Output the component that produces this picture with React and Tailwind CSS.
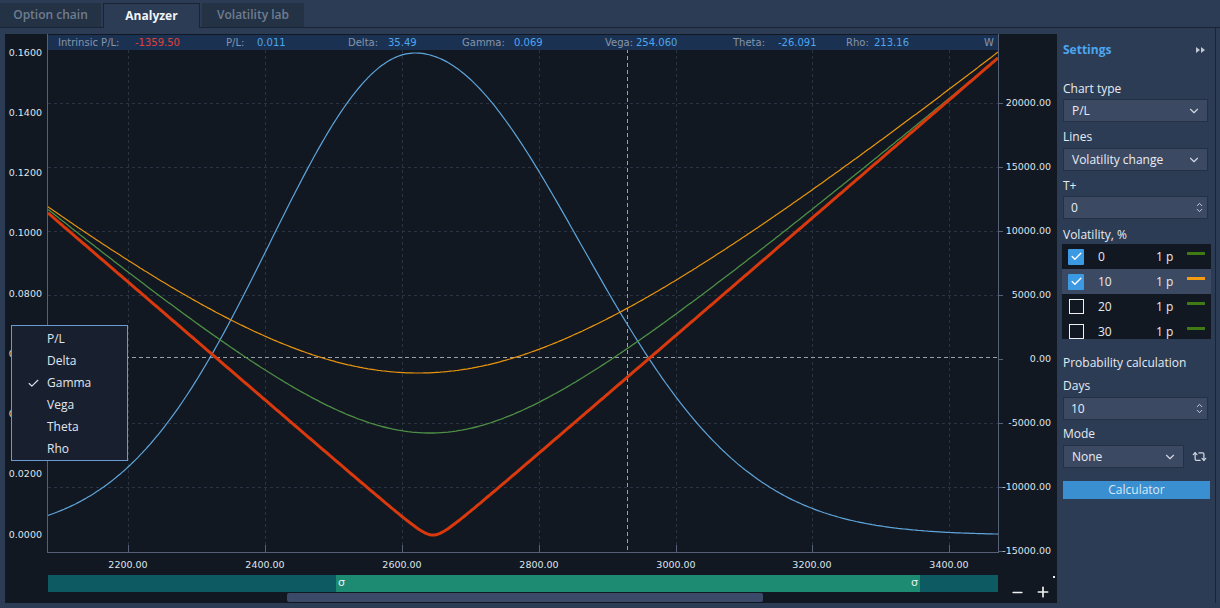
import React from 'react';
import { ChevronDown, ChevronUp, Check, Minus, Plus, Repeat2 } from 'lucide-react';

const X0 = 48;
const X1 = 998;

function curve(f) {
  let d = '';
  for (let x = X0; x <= X1; x += 2) {
    d += (x === X0 ? 'M' : 'L') + x + ',' + f(x).toFixed(1) + ' ';
  }
  return d;
}

// curves in page coordinates
const blue = (x) => {
  const d = x - 415;
  const s = d < 0 ? 145 : 165;
  return 535 - 482 * Math.exp(-(d * d) / (2 * s * s));
};
const red = (x) => {
  const d = x - 433;
  return 545 - Math.sqrt((0.862 * d) ** 2 + 100);
};
const green = (x) => {
  const d = x - 430;
  return 558 - Math.sqrt((0.852 * d) ** 2 + 125 * 125);
};
const orange = (x) => {
  const d = x - 418;
  return 573.6 - Math.sqrt((0.83 * d) ** 2 + 200.6 ** 2);
};

const leftLabels = ['0.1600', '0.1400', '0.1200', '0.1000', '0.0800', '0.0600', '0.0400', '0.0200', '0.0000'];
const rightLabels = ['20000.00', '15000.00', '10000.00', '5000.00', '0.00', '-5000.00', '-10000.00', '-15000.00'];
const xTicks = [
  [128, '2200.00'],
  [265, '2400.00'],
  [402, '2600.00'],
  [539, '2800.00'],
  [676, '3000.00'],
  [812, '3200.00'],
  [949, '3400.00'],
];

const header = [
  { label: 'Intrinsic P/L:', lx: 58, value: '-1359.50', vx: 135, red: true },
  { label: 'P/L:', lx: 226, value: '0.011', vx: 257 },
  { label: 'Delta:', lx: 348, value: '35.49', vx: 388 },
  { label: 'Gamma:', lx: 462, value: '0.069', vx: 514 },
  { label: 'Vega:', lx: 605, value: '254.060', vx: 636 },
  { label: 'Theta:', lx: 733, value: '-26.091', vx: 778 },
  { label: 'Rho:', lx: 846, value: '213.16', vx: 874 },
];

const vols = [
  { v: '0', on: true, color: '#3f7a14' },
  { v: '10', on: true, color: '#f39c12', hl: true },
  { v: '20', on: false, color: '#3f7a14' },
  { v: '30', on: false, color: '#3f7a14' },
];

function Chart() {
  return (
    <svg width="1052" height="539" viewBox="5 34 1052 539" className="block" style={{ fontFamily: '"DejaVu Sans", sans-serif' }}>
      <defs>
        <clipPath id="plot">
          <rect x="48" y="50" width="950" height="502" />
        </clipPath>
      </defs>
      {/* grid */}
      {xTicks.map(([x]) => (
        <line key={x} x1={x + 0.5} y1="50" x2={x + 0.5} y2="552" stroke="#2a3342" strokeDasharray="3 3" />
      ))}
      {[103, 167, 231, 295, 423, 487].map((y) => (
        <line key={y} x1="48" y1={y + 0.5} x2="998" y2={y + 0.5} stroke="#2a3342" strokeDasharray="3 3" />
      ))}
      {/* crosshair */}
      <line x1="627.5" y1="35" x2="627.5" y2="552" stroke="#9aa0a8" strokeDasharray="4 3" />
      <line x1="48" y1="357.5" x2="998" y2="357.5" stroke="#9aa0a8" strokeDasharray="4 3" />
      {/* curves */}
      <g clipPath="url(#plot)" fill="none">
        <path d={curve(blue)} stroke="#5ea5dc" strokeWidth="1.2" />
        <path d={curve(green)} stroke="#4d8f45" strokeWidth="1.3" />
        <path d={curve(red)} stroke="#d9390c" strokeWidth="3" strokeLinejoin="round" />
        <path d={curve(orange)} stroke="#e8940e" strokeWidth="1.2" />
      </g>
      {/* frame */}
      <line x1="47.5" y1="34" x2="47.5" y2="553" stroke="#566076" />
      <line x1="998.5" y1="34" x2="998.5" y2="553" stroke="#566076" />
      <line x1="47" y1="552.5" x2="999" y2="552.5" stroke="#566076" />
      {/* left axis */}
      {leftLabels.map((t, i) => (
        <text key={t} x="42" y={53 + i * 60.25} textAnchor="end" dominantBaseline="middle" fontSize="9.5" fill="#dde4ee">
          {t}
        </text>
      ))}
      {/* right axis */}
      {rightLabels.map((t, i) => (
        <g key={t}>
          <line x1="999" y1={103 + i * 64 + 0.5} x2="1003" y2={103 + i * 64 + 0.5} stroke="#566076" />
          <text x="1051" y={103 + i * 64} textAnchor="end" dominantBaseline="middle" fontSize="9.5" fill="#dde4ee">
            {t}
          </text>
        </g>
      ))}
      {/* bottom axis */}
      {xTicks.map(([x, t]) => (
        <g key={t}>
          <line x1={x + 0.5} y1="545" x2={x + 0.5} y2="552" stroke="#566076" />
          <text x={x} y="565" textAnchor="middle" dominantBaseline="middle" fontSize="9.5" fill="#dde4ee">
            {t}
          </text>
        </g>
      ))}
    </svg>
  );
}

function Select({ text, w = 'w-[145px]' }) {
  return (
    <div className={`${w} h-[23px] bg-[#3c4962] border border-[#243044] flex items-center justify-between pl-[8px] pr-[6px] text-[12px] text-[#e8edf5]`}>
      <span>{text}</span>
      <ChevronDown size={14} color="#d0d6e0" strokeWidth={2} />
    </div>
  );
}

function Spin({ text }) {
  return (
    <div className="w-[145px] h-[23px] bg-[#3c4962] border border-[#243044] flex items-center justify-between pl-[7px] pr-[3px] text-[12px] text-[#e8edf5]">
      <span>{text}</span>
      <div className="flex flex-col items-center -space-y-[3px]">
        <ChevronUp size={9} color="#d0d6e0" strokeWidth={2.5} />
        <ChevronDown size={9} color="#d0d6e0" strokeWidth={2.5} />
      </div>
    </div>
  );
}

function Label({ children, mt }) {
  return <div className={`${mt} h-[18px] leading-[18px] text-[12px] text-[#e6ebf2]`}>{children}</div>;
}

function Settings() {
  return (
    <div className="w-[158px] h-full pl-[6px] flex flex-col" style={{ fontFamily: '"Open Sans", sans-serif' }}>
      <div className="h-[32px] flex items-center justify-between pr-[10px]">
        <span className="text-[12px] font-bold text-[#4da6f0]">Settings</span>
        <svg width="9" height="6" viewBox="0 0 9 6">
          <polygon points="0,0 4,3 0,6" fill="#c0c8d4" />
          <polygon points="5,0 9,3 5,6" fill="#c0c8d4" />
        </svg>
      </div>
      <Label mt="mt-[14px]">Chart type</Label>
      <div className="mt-[1px]">
        <Select text="P/L" />
      </div>
      <Label mt="mt-[6px]">Lines</Label>
      <div className="mt-[2px]">
        <Select text="Volatility change" />
      </div>
      <Label mt="mt-[6px]">T+</Label>
      <div className="mt-[1px]">
        <Spin text="0" />
      </div>
      <Label mt="mt-[7px]">Volatility, %</Label>
      <div className="-ml-px w-[149px] h-[95px] bg-[#121821] overflow-hidden">
        {vols.map((r) => (
          <div key={r.v} className={`h-[25px] flex items-center text-[12px] text-[#e6ebf2] ${r.hl ? 'bg-[#3c4962]' : ''}`}>
            <div className="ml-[6px] w-[16px] h-[16px] flex items-center justify-center">
              {r.on ? (
                <div className="w-[16px] h-[16px] bg-[#3b9ae1] rounded-[1px] flex items-center justify-center">
                  <Check size={13} color="#ffffff" strokeWidth={2.5} />
                </div>
              ) : (
                <div className="w-[15px] h-[15px] border-[1.5px] border-[#f0f0f0]" />
              )}
            </div>
            <span className="ml-[14px] w-[58px]">{r.v}</span>
            <span className="w-[31px]">1 p</span>
            <div className="w-[18px] h-[3px] -mt-[6px]" style={{ background: r.color }} />
          </div>
        ))}
      </div>
      <Label mt="mt-[15px]">Probability calculation</Label>
      <Label mt="mt-[5px]">Days</Label>
      <div className="mt-[2px]">
        <Spin text="10" />
      </div>
      <Label mt="mt-[5px]">Mode</Label>
      <div className="mt-[2px] flex items-center">
        <Select text="None" w="w-[121px]" />
        <Repeat2 size={15} color="#d0d6e0" strokeWidth={2} className="ml-[8px]" />
      </div>
      <div className="mt-[13px] w-[147px] h-[18px] bg-[#3a8fd0] flex items-center justify-center text-[12px] text-[#dbe8f5]">
        Calculator
      </div>
    </div>
  );
}

export default function App() {
  const menu = ['P/L', 'Delta', 'Gamma', 'Vega', 'Theta', 'Rho'];
  return (
    <div className="w-[1220px] h-[608px] bg-[#2c3c54] flex flex-col overflow-hidden" style={{ fontFamily: '"Open Sans", sans-serif' }}>
      {/* tabs */}
      <div className="h-[28px] flex items-end gap-[2px] border-b border-[#1b2433]">
        <div className="w-[101px] h-[24px] bg-[#243245] flex items-center justify-center text-[12px] font-semibold text-[#6f7d90]">
          Option chain
        </div>
        <div className="w-[97px] h-[25px] -mb-px bg-[#2c3c54] border border-b-0 border-[#1b2433] flex items-center justify-center text-[12px] font-bold text-[#f0f4f8]">
          Analyzer
        </div>
        <div className="w-[102px] h-[24px] bg-[#243245] flex items-center justify-center text-[12px] font-semibold text-[#6f7d90]">
          Volatility lab
        </div>
      </div>

      <div className="flex mt-[6px]">
        {/* chart panel */}
        <div className="ml-[5px] w-[1052px] h-[569px] bg-[#121821] relative">
          <Chart />

          {/* header overlay */}
          <div
            className="absolute left-[43px] top-[1px] w-[950px] h-[15px] bg-[#1b3152] text-[10px] leading-[15px]"
            style={{ fontFamily: '"DejaVu Sans", sans-serif' }}
          >
            {header.map((h) => (
              <React.Fragment key={h.label}>
                <span className="absolute text-[#8595aa]" style={{ left: h.lx - 48 }}>
                  {h.label}
                </span>
                <span className={`absolute ${h.red ? 'text-[#e0403a]' : 'text-[#4da6f0]'}`} style={{ left: h.vx - 48 }}>
                  {h.value}
                </span>
              </React.Fragment>
            ))}
            <span className="absolute left-[936px] text-[#8595aa]">W</span>
          </div>

          {/* chart lines menu */}
          <div className="absolute left-[6px] top-[291px] w-[117px] h-[136px] bg-[#182030] border border-[#6a9bd0] pt-[2px]">
            {menu.map((m) => (
              <div key={m} className="h-[22px] flex items-center text-[12px] text-[#e0e6ee]">
                <div className="w-[35px] flex justify-end pr-[7px]">
                  {m === 'Gamma' && <Check size={13} color="#e0e6ee" strokeWidth={2} />}
                </div>
                <span>{m}</span>
              </div>
            ))}
          </div>

          {/* sigma bar + scroll */}
          <div className="flex mt-[2px]">
            <div className="ml-[43px] w-[950px] flex flex-col">
              <div className="h-[17px] flex text-[11px] text-[#e8f0f0]" style={{ fontFamily: '"DejaVu Sans", sans-serif' }}>
                <div className="w-[288px] bg-[#0d5a62]" />
                <div className="w-[584px] bg-[#1d8a72] flex items-center justify-between px-[2px]">
                  <span>σ</span>
                  <span>σ</span>
                </div>
                <div className="flex-1 bg-[#0d5a62]" />
              </div>
              <div className="mt-[1px] ml-[239px] w-[476px] h-[9px] bg-[#3b4a68] rounded-[2px]" />
            </div>
            <div className="flex items-center gap-[10px] ml-[12px] mt-[7px] relative">
              <Minus size={15} color="#f0f0f0" strokeWidth={2.5} />
              <Plus size={16} color="#f0f0f0" strokeWidth={2.5} />
              <div className="absolute right-[-4px] top-[-6px] w-[2px] h-[2px] bg-[#f0f0f0]" />
            </div>
          </div>
        </div>

        <Settings />
        <div className="w-px h-[575px] -mt-[6px] bg-[#1b2433]" />
      </div>
    </div>
  );
}
